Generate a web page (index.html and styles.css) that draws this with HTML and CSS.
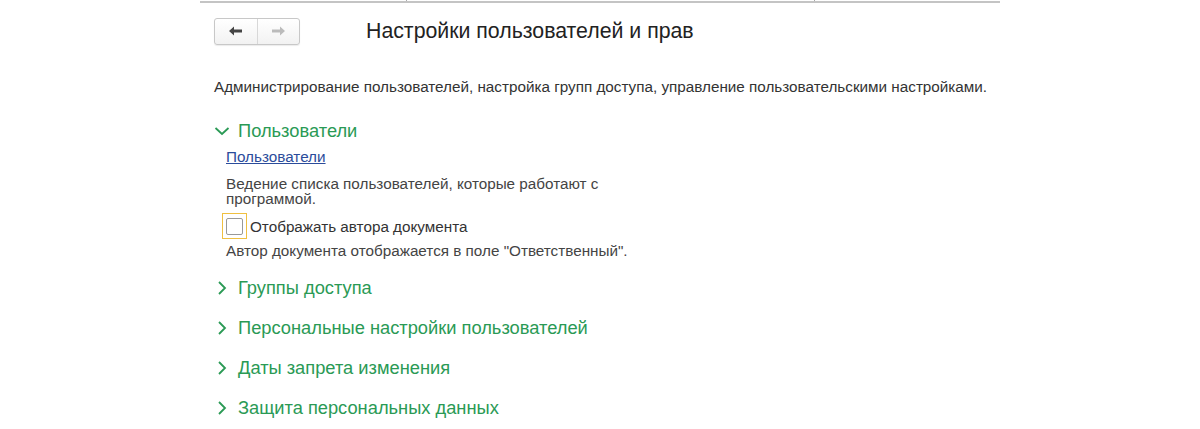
FILE: index.html
```html
<!DOCTYPE html>
<html lang="ru">
<head>
<meta charset="utf-8">
<link rel="stylesheet" href="styles.css">
</head>
<body>
<div class="page">
  <div class="tabs">
    <div class="tab"></div>
    <div class="tab"></div>
    <div class="tab"></div>
  </div>
  <div class="header">
    <div class="nav">
      <button class="nav-btn">
        <svg width="16" height="12" viewBox="0 0 16 12"><path d="M1 6 L6 1.5 L6 4.5 L14 4.5 L14 7.5 L6 7.5 L6 10.5 Z" fill="#444"/></svg>
      </button>
      <button class="nav-btn">
        <svg width="16" height="12" viewBox="0 0 16 12"><path d="M15 6 L10 1.5 L10 4.5 L2 4.5 L2 7.5 L10 7.5 L10 10.5 Z" fill="#bbb"/></svg>
      </button>
    </div>
    <h1 class="title">Настройки пользователей и прав</h1>
  </div>
  <p class="intro">Администрирование пользователей, настройка групп доступа, управление пользовательскими настройками.</p>

  <div class="group open">
    <div class="group-head">
      <svg class="chev" width="16" height="16" viewBox="0 0 16 16"><path d="M1.5 5 L8 11 L14.5 5" fill="none" stroke="#2a9a55" stroke-width="1.8"/></svg>
      <span>Пользователи</span>
    </div>
    <div class="group-body">
      <a class="link" href="#">Пользователи</a>
      <p class="note note-wrap">Ведение списка пользователей, которые работают с программой.</p>
      <label class="check">
        <span class="focus"><span class="box"></span></span>
        <span class="check-label">Отображать автора документа</span>
      </label>
      <p class="note note-author">Автор документа отображается в поле "Ответственный".</p>
    </div>
  </div>

  <div class="group">
    <div class="group-head">
      <svg class="chev" width="16" height="16" viewBox="0 0 16 16"><path d="M5 2 L11 8 L5 14" fill="none" stroke="#2a9a55" stroke-width="1.8"/></svg>
      <span>Группы доступа</span>
    </div>
  </div>
  <div class="group">
    <div class="group-head">
      <svg class="chev" width="16" height="16" viewBox="0 0 16 16"><path d="M5 2 L11 8 L5 14" fill="none" stroke="#2a9a55" stroke-width="1.8"/></svg>
      <span>Персональные настройки пользователей</span>
    </div>
  </div>
  <div class="group">
    <div class="group-head">
      <svg class="chev" width="16" height="16" viewBox="0 0 16 16"><path d="M5 2 L11 8 L5 14" fill="none" stroke="#2a9a55" stroke-width="1.8"/></svg>
      <span>Даты запрета изменения</span>
    </div>
  </div>
  <div class="group">
    <div class="group-head">
      <svg class="chev" width="16" height="16" viewBox="0 0 16 16"><path d="M5 2 L11 8 L5 14" fill="none" stroke="#2a9a55" stroke-width="1.8"/></svg>
      <span>Защита персональных данных</span>
    </div>
  </div>
</div>
</body>
</html>
```
FILE: styles.css
```css
* { box-sizing: border-box; }
html, body { margin: 0; padding: 0; background: #fff; }
body {
  font-family: "Liberation Sans", Arial, sans-serif;
  color: #333;
  overflow: hidden;
}
.page {
  width: 800px;
  margin-left: 200px;
}
.tabs {
  display: flex;
  height: 3px;
  border-bottom: 2px solid #c4c4c4;
}
.tab {
  flex: 0 0 207px;
  border-right: 1px solid #aaa;
}
.tab:nth-child(2) { flex-basis: 408px; }
.tab:nth-child(3) { flex: 1; border-right: none; }
.header {
  display: flex;
  align-items: center;
  padding: 12px 0 0 14px;
  height: 44px;
}
.nav {
  display: flex;
  width: 86px;
  height: 27px;
  border: 1px solid #c8c8c8;
  border-radius: 3px;
  background: linear-gradient(#fff, #f2f2f2);
  box-shadow: 0 1px 1px rgba(0,0,0,0.08);
}
.nav-btn {
  flex: 1;
  border: none;
  background: transparent;
  padding: 0;
  display: flex;
  align-items: center;
  justify-content: center;
}
.nav-btn + .nav-btn { border-left: 1px solid #d8d8d8; }
.title {
  margin: 0 0 0 66px;
  font-size: 21.3px;
  line-height: 26px;
  font-weight: normal;
  color: #222;
}
.intro {
  margin: 31px 0 0 14px;
  font-size: 15.25px;
  line-height: 18px;
  color: #333;
}
.group { margin-left: 14px; }
.group-head {
  display: flex;
  align-items: center;
  gap: 8px;
  height: 40px;
  font-size: 18.3px;
  color: #2a9a55;
}
.group.open .group-head { margin-top: 19px; height: 32px; }
.chev { flex: none; }
.group-body {
  padding-left: 12px;
  padding-bottom: 10.5px;
  font-size: 15.25px;
}
.link {
  display: inline-block;
  color: #2b4c9b;
  text-decoration: underline;
  line-height: 18px;
  margin-top: 1px;
}
.note {
  margin: 9.5px 0 0;
  color: #444;
  line-height: 15px;
}
.note-wrap { width: 400px; }
.note-author { margin-top: 3.5px; }
.check {
  display: flex;
  align-items: center;
  gap: 3px;
  margin: 7.5px 0 0 -4px;
}
.focus {
  width: 25px;
  height: 26px;
  border: 1px solid #f0c040;
  display: flex;
  align-items: center;
  justify-content: center;
}
.box {
  width: 17px;
  height: 17px;
  border: 1px solid #999;
  border-radius: 2px;
  background: #fff;
}
.check-label { color: #333; }
```
